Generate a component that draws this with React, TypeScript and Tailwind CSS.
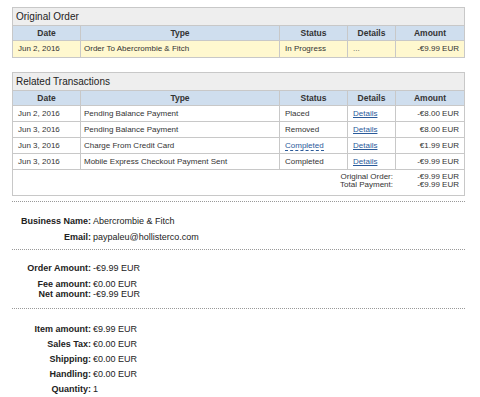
import React from "react";

const font = { fontFamily: '"Liberation Sans", Arial, sans-serif' };

const gridCols = "grid grid-cols-[68px_199px_68px_48px_68px]";

function Header() {
  const c = "h-[15px] leading-[15px] text-center font-bold text-[8.5px] text-[#333] border-r border-b border-[#c8c8c8] bg-[#cfdeee]";
  return (
    <div className={gridCols}>
      <div className={c}>Date</div>
      <div className={c}>Type</div>
      <div className={c}>Status</div>
      <div className={c}>Details</div>
      <div className={c + " border-r-0"}>Amount</div>
    </div>
  );
}

type Row = {
  date: string;
  type: string;
  status: string;
  statusLink?: boolean;
  details: string;
  detailsLink?: boolean;
  amount: string;
};

function DataRow({ r, bg, h }: { r: Row; bg: string; h: string }) {
  const base = `${h} text-[8px] text-[#333] border-r border-b border-[#c8c8c8] flex items-center ${bg}`;
  return (
    <div className={gridCols}>
      <div className={base + " pl-[5px]"}>{r.date}</div>
      <div className={base + " pl-[3px]"}>{r.type}</div>
      <div className={base + " pl-[5px]"}>
        {r.statusLink ? (
          <span className="text-[#2a5a9a] border-b border-dashed border-[#2a5a9a] leading-[9px]">{r.status}</span>
        ) : (
          r.status
        )}
      </div>
      <div className={base + " pl-[5px]"}>
        {r.detailsLink ? <span className="text-[#2a5a9a] underline">{r.details}</span> : <span className="text-[#555]">{r.details}</span>}
      </div>
      <div className={base + " border-r-0 justify-end pr-[5px]"}>{r.amount}</div>
    </div>
  );
}

function Title({ text }: { text: string }) {
  return (
    <div className="h-[18px] leading-[18px] bg-[#eeeeee] border-b border-[#c8c8c8] pl-[3px] text-[10px] text-[#222]">
      {text}
    </div>
  );
}

const related: Row[] = [
  { date: "Jun 2, 2016", type: "Pending Balance Payment", status: "Placed", details: "Details", detailsLink: true, amount: "-€8.00 EUR" },
  { date: "Jun 3, 2016", type: "Pending Balance Payment", status: "Removed", details: "Details", detailsLink: true, amount: "€8.00 EUR" },
  { date: "Jun 3, 2016", type: "Charge From Credit Card", status: "Completed", statusLink: true, details: "Details", detailsLink: true, amount: "€1.99 EUR" },
  { date: "Jun 3, 2016", type: "Mobile Express Checkout Payment Sent", status: "Completed", details: "Details", detailsLink: true, amount: "-€9.99 EUR" },
];

function Field({ label, value, h = "h-[16px] leading-[16px]" }: { label: string; value: string; h?: string }) {
  return (
    <div className={`flex ${h} text-[9px] text-[#222]`}>
      <div className="w-[79px] text-right font-bold">{label}</div>
      <div className="pl-[2px]">{value}</div>
    </div>
  );
}

export default function App() {
  return (
    <div className="w-[480px] h-[397px] bg-white overflow-hidden" style={font}>
      <div className="ml-[12px] w-[453px] pt-[7px]">
        <div className="border border-[#c8c8c8] border-b-0">
          <Title text="Original Order" />
          <Header />
          <DataRow
            r={{ date: "Jun 2, 2016", type: "Order To Abercrombie & Fitch", status: "In Progress", details: "...", amount: "-€9.99 EUR" }}
            bg="bg-[#fff8cf]"
            h="h-[17px]"
          />
        </div>

        <div className="mt-[14px] border border-[#c8c8c8]">
          <Title text="Related Transactions" />
          <Header />
          {related.map((r, i) => (
            <DataRow key={i} r={r} bg="bg-white" h="h-[16px]" />
          ))}
          <div className="h-[25px] pt-[3px] flex justify-end text-[8px] leading-[8px] text-[#333]">
            <div className="text-right pr-[3px]">
              <div>Original Order:</div>
              <div>Total Payment:</div>
            </div>
            <div className="w-[68px] text-right pr-[5px]">
              <div>-€9.99 EUR</div>
              <div>-€9.99 EUR</div>
            </div>
          </div>
        </div>

        <div className="mt-[5px] border-t border-dotted border-[#999] pt-[11px] pb-[4px]">
          <Field label="Business Name:" value="Abercrombie & Fitch" />
          <Field label="Email:" value="paypaleu@hollisterco.com" />
        </div>

        <div className="border-t border-dotted border-[#999] pt-[10px] pb-[9px]">
          <Field label="Order Amount:" value="-€9.99 EUR" />
          <div className="mt-[3px]">
            <Field label="Fee amount:" value="€0.00 EUR" h="h-[10px] leading-[10px]" />
            <Field label="Net amount:" value="-€9.99 EUR" h="h-[10px] leading-[10px]" />
          </div>
        </div>

        <div className="border-t border-dotted border-[#999] pt-[13px]">
          <Field label="Item amount:" value="€9.99 EUR" h="h-[15px] leading-[15px]" />
          <Field label="Sales Tax:" value="€0.00 EUR" h="h-[15px] leading-[15px]" />
          <Field label="Shipping:" value="€0.00 EUR" h="h-[15px] leading-[15px]" />
          <Field label="Handling:" value="€0.00 EUR" h="h-[15px] leading-[15px]" />
          <Field label="Quantity:" value="1" h="h-[15px] leading-[15px]" />
        </div>
      </div>
    </div>
  );
}
